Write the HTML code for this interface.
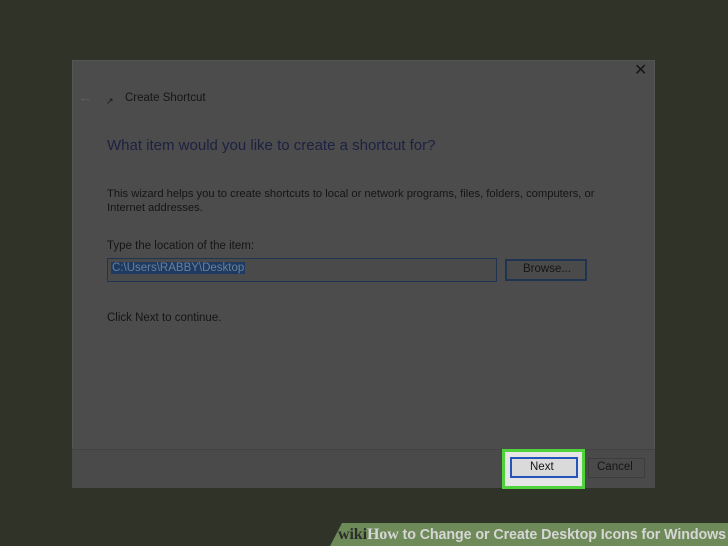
<!DOCTYPE html>
<html><head><style>
*{margin:0;padding:0;box-sizing:border-box}
body{width:728px;height:546px;background:#2f3328;position:relative;overflow:hidden;font-family:"Liberation Sans",sans-serif}
.dlg{position:absolute;left:72px;top:60px;width:583px;height:428px;background:#4c4c4c;border:1px solid #555}
.foot{position:absolute;left:72px;top:449px;width:583px;height:39px;background:#4a4a4a;border-top:1px solid #424242}
.t{position:absolute;color:#151515;font-size:11.5px;white-space:nowrap}
</style></head><body>
<div class="dlg"></div>
<div class="foot"></div>
<div class="t" style="left:78px;top:89px;color:#5e5e5e;font-size:15px">&#8592;</div>
<div class="t" style="left:106px;top:96px;font-size:9px">&#8599;</div>
<div class="t" style="left:125px;top:92px;font-size:11.5px">Create Shortcut</div>
<div class="t" style="left:634px;top:60px;font-size:16px">&#10005;</div>
<div class="t" style="left:107px;top:137px;font-size:15px;color:#1c2142">What item would you like to create a shortcut for?</div>
<div class="t" style="left:107px;top:187px;font-size:11.2px;line-height:14px">This wizard helps you to create shortcuts to local or network programs, files, folders, computers, or<br>Internet addresses.</div>
<div class="t" style="left:107px;top:240px">Type the location of the item:</div>
<div style="position:absolute;left:107px;top:258px;width:390px;height:24px;border:1px solid #1f3352;background:#4a4a4a"></div>
<div class="t" style="left:111px;top:262px;background:#1e3a60;color:#6b7f99;font-size:11.5px;padding:0 1px">C:\Users\RABBY\Desktop</div>
<div style="position:absolute;left:505px;top:259px;width:82px;height:22px;border:2px solid #1f3352;background:#4a4a4a"></div>
<div class="t" style="left:523px;top:263px">Browse...</div>
<div class="t" style="left:107px;top:312px">Click Next to continue.</div>
<div style="position:absolute;left:502px;top:449px;width:83px;height:40px;background:#e6e6e6;border:3px solid #4ed43a"></div>
<div style="position:absolute;left:510px;top:457px;width:68px;height:21px;background:#dadada;border:2px solid #2555b8"></div>
<div class="t" style="left:530px;top:461px">Next</div>
<div style="position:absolute;left:588px;top:458px;width:57px;height:20px;border:1px solid #3d3d3d;background:#4a4a4a"></div>
<div class="t" style="left:597px;top:461px">Cancel</div>
<div style="position:absolute;left:330px;top:523px;width:398px;height:23px;background:#6e8a58;clip-path:polygon(12px 0,100% 0,100% 100%,0 100%)"></div>
<div class="t" style="left:338px;top:526px;font-size:14.3px;font-weight:bold;color:#d6d6d6;letter-spacing:-0.1px"><span style="font-family:'Liberation Serif',serif;color:#2c2c2c;font-size:16px">wiki</span><span style="font-family:'Liberation Serif',serif;font-size:16px">How</span> to Change or Create Desktop Icons for Windows</div>
</body></html>
